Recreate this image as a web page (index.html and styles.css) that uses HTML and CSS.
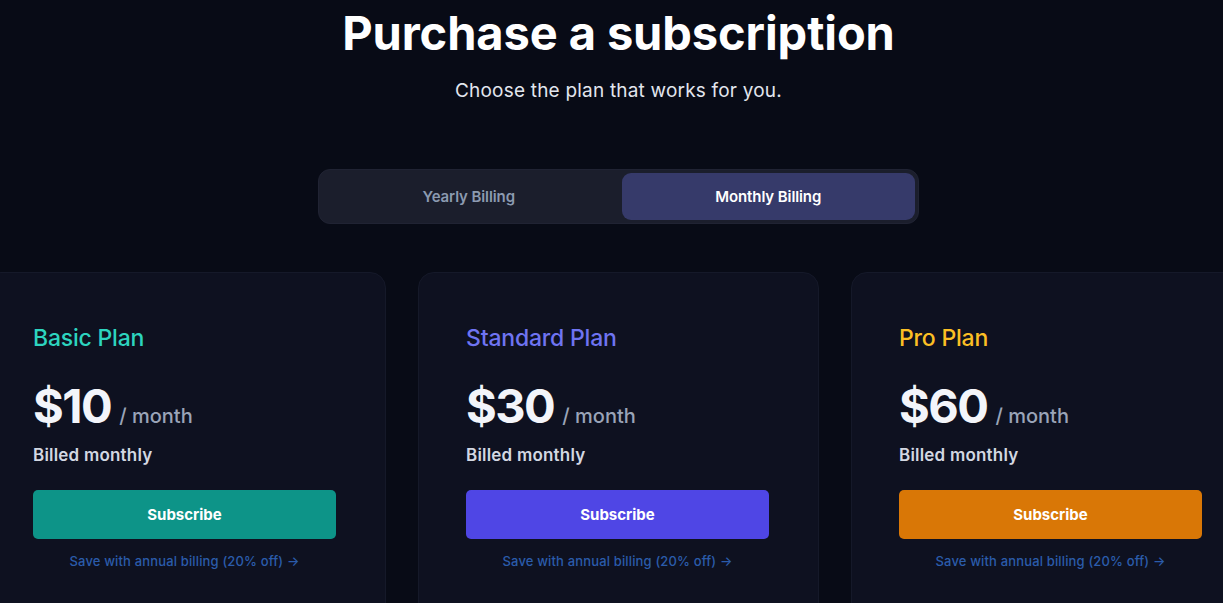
FILE: index.html
```html
<!DOCTYPE html>
<html>
<head>
<meta charset="utf-8">
<link rel="stylesheet" href="styles.css">
</head>
<body>
<main class="page">
  <header class="hero">
    <h1 class="title">Purchase a subscription</h1>
    <p class="subtitle">Choose the plan that works for you.</p>
  </header>
  <div class="toggle">
    <button class="toggle-btn">Yearly Billing</button>
    <button class="toggle-btn active">Monthly Billing</button>
  </div>
  <section class="cards">
    <article class="card">
      <h2 class="plan plan-basic">Basic Plan</h2>
      <div class="price-row"><span class="price">$10</span><span class="per">/ month</span></div>
      <p class="billed">Billed monthly</p>
      <button class="subscribe btn-basic">Subscribe</button>
      <a class="save" href="#">Save with annual billing (20% off) →</a>
    </article>
    <article class="card">
      <h2 class="plan plan-standard">Standard Plan</h2>
      <div class="price-row"><span class="price">$30</span><span class="per">/ month</span></div>
      <p class="billed">Billed monthly</p>
      <button class="subscribe btn-standard">Subscribe</button>
      <a class="save" href="#">Save with annual billing (20% off) →</a>
    </article>
    <article class="card">
      <h2 class="plan plan-pro">Pro Plan</h2>
      <div class="price-row"><span class="price">$60</span><span class="per">/ month</span></div>
      <p class="billed">Billed monthly</p>
      <button class="subscribe btn-pro">Subscribe</button>
      <a class="save" href="#">Save with annual billing (20% off) →</a>
    </article>
  </section>
</main>
</body>
</html>
```
FILE: styles.css
```css
* { box-sizing: border-box; }
html, body {
  margin: 0;
  padding: 0;
  background: #080b16;
  overflow: hidden;
}
body {
  font-family: Inter, "Noto Sans", sans-serif;
  color: #fff;
}
.page {
  width: 1223px;
  height: 603px;
  padding-top: 9px;
  display: flex;
  flex-direction: column;
  align-items: center;
}
.page > * { flex-shrink: 0; }
.hero {
  text-align: center;
  margin-left: 14px;
}
.title {
  margin: 0;
  font-size: 47px;
  line-height: 48px;
  font-weight: 700;
  letter-spacing: -0.1px;
  color: #fff;
}
.subtitle {
  margin: 20px 0 0;
  font-size: 19px;
  line-height: 28px;
  color: #e2e6ee;
  letter-spacing: 0.2px;
}
.toggle {
  margin-top: 64px;
  margin-left: 14px;
  width: 601px;
  height: 55px;
  padding: 3px;
  background: #1b1e2c;
  border: 1px solid #202333;
  border-radius: 12px;
  display: flex;
  gap: 6px;
}
.toggle-btn {
  flex: 1;
  border: none;
  border-radius: 9px;
  background: transparent;
  font-family: inherit;
  font-size: 15px;
  font-weight: 600;
  color: #8c9ab0;
  letter-spacing: -0.1px;
}
.toggle-btn.active {
  background: #363a6a;
  color: #fff;
}
.cards {
  margin-top: 48px;
  align-self: flex-start;
  margin-left: -15px;
  display: flex;
  gap: 32px;
}
.card {
  width: 401px;
  flex: none;
  height: 360px;
  padding: 49px 49px 0 47px;
  background: #0e1120;
  border: 1px solid #151929;
  border-radius: 16px;
  display: flex;
  flex-direction: column;
}
.plan {
  margin: 0;
  font-size: 23px;
  line-height: 32px;
  font-weight: 500;
  letter-spacing: -0.2px;
}
.plan-basic { color: #2dd4bf; }
.plan-standard { color: #6f74f2; }
.plan-pro { color: #fbbf24; }
.price-row {
  margin-top: 28px;
  display: flex;
  align-items: baseline;
  gap: 8px;
}
.price {
  font-size: 47px;
  line-height: 48px;
  font-weight: 700;
  letter-spacing: -1.5px;
  color: #f3f5fa;
}
.per {
  font-size: 20px;
  color: #9aa4b8;
  font-weight: 500;
}
.billed {
  margin: 11px 0 0;
  font-size: 17px;
  line-height: 28px;
  font-weight: 600;
  color: #d3d8e2;
  letter-spacing: 0.2px;
}
.subscribe {
  margin-top: 21px;
  height: 49px;
  width: 100%;
  border: none;
  border-radius: 5px;
  font-family: inherit;
  font-size: 15px;
  font-weight: 700;
  color: #fff;
}
.btn-basic { background: #0d9488; }
.btn-standard { background: #4f46e5; }
.btn-pro { background: #d97706; }
.save {
  margin-top: 12px;
  text-align: center;
  font-size: 13px;
  line-height: 20px;
  color: #2b5cab;
  text-decoration: none;
  font-weight: 500;
  letter-spacing: 0.15px;
}
```
